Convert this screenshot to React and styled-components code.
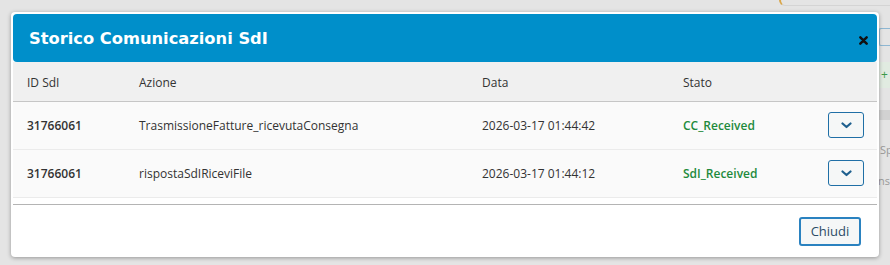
import React from "react";
import styled, { createGlobalStyle } from "styled-components";

const GlobalStyle = createGlobalStyle`
  html, body {
    margin: 0;
    padding: 0;
    background: #e4e4e4;
    font-family: "Open Sans", "Liberation Sans", sans-serif;
    overflow: hidden;
  }
`;

const Page = styled.div`
  width: 890px;
  height: 265px;
  display: flex;
  justify-content: flex-end;
  position: relative;
`;

const SideColumn = styled.div`
  width: 12px;
  display: flex;
  flex-direction: column;
  padding-top: 28px;
  overflow: hidden;
`;

const SideIcon = styled.div`
  height: 16px;
  margin-left: 1px;
  border: 1.5px solid #6aa5cc;
  border-right: none;
  border-radius: 2px 0 0 2px;
  opacity: 0.7;
`;

const SideBadge = styled.div`
  height: 26px;
  margin-top: 16px;
  background: #e1ebe1;
  border-left: 1px solid #c9d8c9;
  color: #3d9a4a;
  font-size: 12px;
  line-height: 26px;
  padding-left: 2px;
  white-space: nowrap;
`;

const SideBand = styled.div`
  height: 10px;
  margin-top: 22px;
  background: #d2d2d2;
`;

const SideText = styled.div`
  font-size: 11px;
  color: #9a9a9a;
  white-space: nowrap;
  margin-top: ${(p) => p.gap}px;
  padding-left: ${(p) => p.pad || 0}px;
`;

const TopBox = styled.div`
  position: absolute;
  top: -8px;
  left: 779px;
  width: 120px;
  height: 12px;
  border: 1px solid #d4d4d4;
  border-left: 2px solid #d9a64a;
  border-radius: 6px;
`;

const Modal = styled.div`
  position: absolute;
  left: 11px;
  top: 12px;
  width: 868px;
  height: 245px;
  box-sizing: border-box;
  padding: 2px;
  background: #ffffff;
  border-radius: 4px;
  box-shadow: 0 1px 4px rgba(0, 0, 0, 0.35);
  display: flex;
  flex-direction: column;
`;

const Header = styled.div`
  height: 48px;
  flex-shrink: 0;
  background: #008fca;
  border-radius: 4px;
  display: flex;
  align-items: center;
  justify-content: space-between;
  padding: 0 9px 0 16px;
`;

const Title = styled.h4`
  margin: 0;
  color: #ffffff;
  font-family: "DejaVu Sans", Verdana, sans-serif;
  font-weight: bold;
  font-size: 16.3px;
`;

const CloseButton = styled.button`
  border: none;
  background: none;
  padding: 0;
  margin-top: 4px;
  display: flex;
  cursor: pointer;
`;

const Body = styled.div`
  flex: 1;
  display: flex;
  flex-direction: column;
`;

const Table = styled.div`
  display: grid;
  grid-template-columns: 112px 343px 201px 159px 1fr;
`;

const HeadCell = styled.div`
  height: 38px;
  background: #f0f0f0;
  border-bottom: 1px solid #c6c6c6;
  display: flex;
  align-items: center;
  padding-left: 14px;
  padding-top: 1px;
  font-size: 12px;
  color: #333;
  font-weight: 500;
`;

const Cell = styled.div`
  height: 47px;
  background: #fafafa;
  border-bottom: 1px solid #ebebeb;
  display: flex;
  align-items: center;
  padding-left: 14px;
  font-size: 12px;
  color: ${(p) => (p.status ? "#1e8a3c" : "#333")};
  font-weight: ${(p) => (p.bold ? 600 : 400)};
  white-space: nowrap;
`;

const ActionCell = styled(Cell)`
  padding-left: 0;
  justify-content: flex-start;
`;

const ExpandButton = styled.button`
  width: 36px;
  height: 26px;
  margin-top: -1px;
  box-sizing: border-box;
  border: 1.5px solid #1f6fa6;
  border-radius: 3px;
  background: #f5f7f7;
  display: flex;
  align-items: center;
  justify-content: center;
  padding: 0;
  cursor: pointer;
`;

const Footer = styled.div`
  margin-top: auto;
  height: 50px;
  border-top: 1px solid #b4b4b4;
  display: flex;
  align-items: center;
  justify-content: flex-end;
  padding-right: 16px;
`;

const FooterButton = styled.button`
  width: 62px;
  height: 29px;
  margin-top: 2px;
  border: 2px solid #2a82c0;
  border-radius: 3px;
  background: #f5f7f7;
  color: #2b4c66;
  font-family: "Open Sans", "Liberation Sans", sans-serif;
  font-size: 13px;
  padding: 0;
  cursor: pointer;
`;

const rows = [
  {
    id: "31766061",
    azione: "TrasmissioneFatture_ricevutaConsegna",
    data: "2026-03-17 01:44:42",
    stato: "CC_Received",
  },
  {
    id: "31766061",
    azione: "rispostaSdIRiceviFile",
    data: "2026-03-17 01:44:12",
    stato: "SdI_Received",
  },
];

const Chevron = () => (
  <svg width="11" height="7" viewBox="0 0 11 7">
    <polyline
      points="1.5,1.5 5.5,5 9.5,1.5"
      fill="none"
      stroke="#1d5f8e"
      strokeWidth="2.2"
      strokeLinecap="round"
      strokeLinejoin="round"
    />
  </svg>
);

const CloseIcon = () => (
  <svg width="9" height="9" viewBox="0 0 10 10">
    <path d="M1.5 1.5 L8.5 8.5 M8.5 1.5 L1.5 8.5" stroke="#111" strokeWidth="2.8" strokeLinecap="round" />
  </svg>
);

const App = () => {
  return (
    <Page>
      <GlobalStyle />
      <TopBox />
      <SideColumn>
        <SideIcon />
        <SideBadge>+ C</SideBadge>
        <SideBand />
        <SideText gap={22} pad={2}>Sp</SideText>
        <SideText gap={16}>nsp</SideText>
      </SideColumn>
      <Modal>
        <Header>
          <Title>Storico Comunicazioni SdI</Title>
          <CloseButton aria-label="Chiudi">
            <CloseIcon />
          </CloseButton>
        </Header>
        <Body>
          <Table>
            <HeadCell>ID SdI</HeadCell>
            <HeadCell>Azione</HeadCell>
            <HeadCell>Data</HeadCell>
            <HeadCell>Stato</HeadCell>
            <HeadCell />
            {rows.map((r) => (
              <React.Fragment key={r.stato}>
                <Cell bold>{r.id}</Cell>
                <Cell>{r.azione}</Cell>
                <Cell>{r.data}</Cell>
                <Cell bold status>{r.stato}</Cell>
                <ActionCell>
                  <ExpandButton>
                    <Chevron />
                  </ExpandButton>
                </ActionCell>
              </React.Fragment>
            ))}
          </Table>
          <Footer>
            <FooterButton>Chiudi</FooterButton>
          </Footer>
        </Body>
      </Modal>
    </Page>
  );
};

export default App;
